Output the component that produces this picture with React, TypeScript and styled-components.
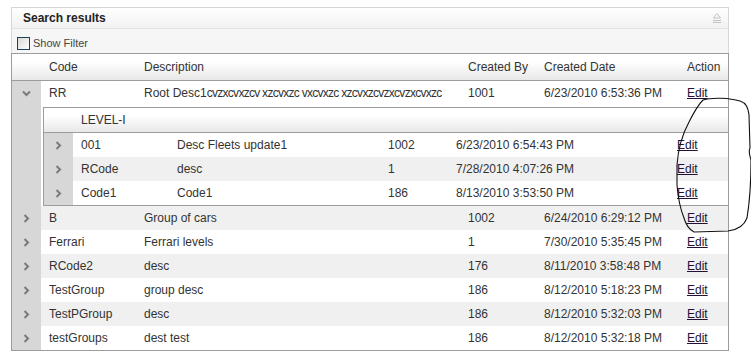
import React from 'react';
import styled, { createGlobalStyle } from 'styled-components';

const GlobalStyle = createGlobalStyle`
  html, body {
    margin: 0;
    padding: 0;
    background: #ffffff;
  }
  body {
    font-family: 'Liberation Sans', Arial, sans-serif;
    font-size: 12px;
    color: #333333;
  }
`;

const MAIN_COLS = '29px 95px 324px 76px 143px 1fr';
const SUB_COLS = '29px 96px 211px 68px 221px 1fr';

const Page = styled.div`
  position: relative;
  width: 751px;
  height: 351px;
  overflow: hidden;
  padding: 7px 0 0 11px;
  box-sizing: border-box;
`;

const Panel = styled.div`
  width: 718px;
`;

const PanelHeader = styled.div`
  height: 20px;
  border: 1px solid #d6d6d6;
  border-bottom-color: #e2e2e2;
  background: linear-gradient(#ffffff, #f1f1f1);
  display: flex;
  align-items: center;
  justify-content: space-between;
  padding: 0 7px 0 11px;
`;

const Title = styled.span`
  font-weight: bold;
  font-size: 12px;
  color: #222222;
`;

const FilterBar = styled.div`
  height: 24px;
  border-left: 1px solid #d6d6d6;
  border-right: 1px solid #d6d6d6;
  background: #f6f6f6;
  display: flex;
  align-items: flex-end;
  padding: 0 0 3px 5px;
  box-sizing: border-box;
`;

const CheckBox = styled.span`
  width: 11px;
  height: 11px;
  border: 1px solid #1f3f5f;
  background: linear-gradient(135deg, #d8d8d4, #ffffff);
`;

const FilterLabel = styled.span`
  font-size: 11px;
  line-height: 13px;
  margin-left: 3px;
  color: #444444;
`;

const Grid = styled.div<{ $nested?: boolean }>`
  border: 1px solid #9c9c9c;
  border-right: ${(p) => (p.$nested ? 'none' : '1px solid #9c9c9c')};
  background: #ffffff;
`;

const HeaderRow = styled.div<{ $cols: string; $h: number }>`
  display: grid;
  grid-template-columns: ${(p) => p.$cols};
  height: ${(p) => p.$h}px;
  border-bottom: 1px solid #9c9c9c;
  background: linear-gradient(#ffffff 30%, #e8e8e8);
`;

const Row = styled.div<{ $cols: string; $alt?: boolean }>`
  display: grid;
  grid-template-columns: ${(p) => p.$cols};
  height: 24px;
  background: ${(p) => (p.$alt ? '#f0f0f0' : '#ffffff')};
`;

const DetailRow = styled.div`
  display: grid;
  grid-template-columns: ${MAIN_COLS};
  background: #ffffff;
`;

const DetailCell = styled.div`
  grid-column: 2 / -1;
  padding: 2px 0 0 2px;
`;

const ExpandCell = styled.div`
  background: #d7d7d7;
  display: flex;
  align-items: center;
  justify-content: center;
`;

const HeadCell = styled.div`
  padding-left: 8px;
  display: flex;
  align-items: center;
  white-space: nowrap;
  color: #333333;
`;

const Cell = styled.div`
  padding-left: 8px;
  line-height: 24px;
  white-space: nowrap;
  overflow: hidden;
  color: #333333;
`;

const Tight = styled.span`
  letter-spacing: -0.72px;
`;

const EditLink = styled.a`
  color: #231238;
  text-decoration: underline;
  cursor: pointer;
`;

const Annotation = styled.svg`
  position: absolute;
  left: 0;
  top: 0;
  pointer-events: none;
`;

const Chevron = ({ open }: { open?: boolean }) =>
  open ? (
    <svg width="9" height="7" viewBox="0 0 9 7">
      <polyline points="1,1.5 4.5,5 8,1.5" fill="none" stroke="#7b7b7b" strokeWidth="2" />
    </svg>
  ) : (
    <svg width="7" height="9" viewBox="0 0 7 9">
      <polyline points="1.5,1 5,4.5 1.5,8" fill="none" stroke="#7b7b7b" strokeWidth="2" />
    </svg>
  );

const CollapseIcon = () => (
  <svg width="8" height="11" viewBox="0 0 8 11">
    <polygon points="4,0.5 7.5,5 0.5,5" fill="none" stroke="#c2c2c2" strokeWidth="1" />
    <line x1="0" y1="7.5" x2="8" y2="7.5" stroke="#c2c2c2" />
    <line x1="0" y1="9.5" x2="8" y2="9.5" stroke="#c2c2c2" />
  </svg>
);

type Item = { code: string; desc: React.ReactNode; by: string; date: string };

const subRows: Item[] = [
  { code: '001', desc: 'Desc Fleets update1', by: '1002', date: '6/23/2010 6:54:43 PM' },
  { code: 'RCode', desc: 'desc', by: '1', date: '7/28/2010 4:07:26 PM' },
  { code: 'Code1', desc: 'Code1', by: '186', date: '8/13/2010 3:53:50 PM' },
];

const mainRows: Item[] = [
  {
    code: 'RR',
    desc: (
      <>
        Root Desc1<Tight>cvzxcvxzcv xzcvxzc vxcvxzc xzcvxzcvzxcvzxcvxzc</Tight>
      </>
    ),
    by: '1001',
    date: '6/23/2010 6:53:36 PM',
  },
  { code: 'B', desc: 'Group of cars', by: '1002', date: '6/24/2010 6:29:12 PM' },
  { code: 'Ferrari', desc: 'Ferrari levels', by: '1', date: '7/30/2010 5:35:45 PM' },
  { code: 'RCode2', desc: 'desc', by: '176', date: '8/11/2010 3:58:48 PM' },
  { code: 'TestGroup', desc: 'group desc', by: '186', date: '8/12/2010 5:18:23 PM' },
  { code: 'TestPGroup', desc: 'desc', by: '186', date: '8/12/2010 5:32:03 PM' },
  { code: 'testGroups', desc: 'dest test', by: '186', date: '8/12/2010 5:32:18 PM' },
];

const DataRow = ({ item, cols, alt, open }: { item: Item; cols: string; alt: boolean; open?: boolean }) => (
  <Row $cols={cols} $alt={alt}>
    <ExpandCell>
      <Chevron open={open} />
    </ExpandCell>
    <Cell>{item.code}</Cell>
    <Cell>{item.desc}</Cell>
    <Cell>{item.by}</Cell>
    <Cell>{item.date}</Cell>
    <Cell>
      <EditLink>Edit</EditLink>
    </Cell>
  </Row>
);

const LevelGrid = () => (
  <Grid $nested>
    <HeaderRow $cols={SUB_COLS} $h={24}>
      <HeadCell />
      <HeadCell>LEVEL-I</HeadCell>
    </HeaderRow>
    {subRows.map((r, i) => (
      <DataRow key={r.code} item={r} cols={SUB_COLS} alt={i % 2 === 1} />
    ))}
  </Grid>
);

export default function App() {
  return (
    <Page>
      <GlobalStyle />
      <Panel>
        <PanelHeader>
          <Title>Search results</Title>
          <CollapseIcon />
        </PanelHeader>
        <FilterBar>
          <CheckBox />
          <FilterLabel>Show Filter</FilterLabel>
        </FilterBar>
        <Grid>
          <HeaderRow $cols={MAIN_COLS} $h={26}>
            <HeadCell />
            <HeadCell>Code</HeadCell>
            <HeadCell>Description</HeadCell>
            <HeadCell>Created By</HeadCell>
            <HeadCell>Created Date</HeadCell>
            <HeadCell>Action</HeadCell>
          </HeaderRow>
          {mainRows.map((r, i) => (
            <React.Fragment key={r.code}>
              <DataRow item={r} cols={MAIN_COLS} alt={i % 2 === 1} open={i === 0} />
              {i === 0 && (
                <DetailRow>
                  <ExpandCell />
                  <DetailCell>
                    <LevelGrid />
                  </DetailCell>
                </DetailRow>
              )}
            </React.Fragment>
          ))}
        </Grid>
      </Panel>
      <Annotation width="751" height="351" viewBox="0 0 751 351">
        <path
          d="M703,100 C712,97 730,98 740,101 C746,103 748,107 749,115 L750,148 C748,152 750,156 751,160 C751,180 750,200 747,218 C744,226 737,230 728,231 L694,232 C690,230 686,225 684,218 C680,208 678,198 677,185 L677,165 C678,150 682,135 689,122 C694,112 698,105 703,100 Z"
          fill="none"
          stroke="#111111"
          strokeWidth="1.1"
        />
      </Annotation>
    </Page>
  );
}
